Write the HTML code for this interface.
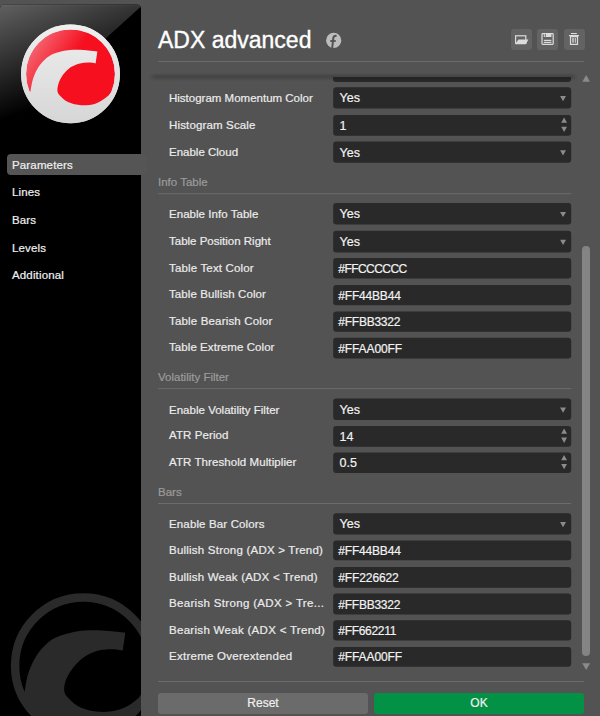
<!DOCTYPE html>
<html><head><meta charset="utf-8">
<style>
*{margin:0;padding:0;box-sizing:border-box}
html,body{width:600px;height:716px;overflow:hidden;background:#535353;font-family:"Liberation Sans",sans-serif}
.tab{-webkit-text-stroke:0.2px #f0f0f0;position:absolute;left:7px;width:140px;height:21.5px;line-height:23px;letter-spacing:0.15px;font-size:11.5px;color:#f0f0f0;padding-left:5px;border-radius:4px}
.tab.sel{background:#555}
#title{-webkit-text-stroke:0.35px #fff;position:absolute;left:158px;top:28px;font-size:23px;color:#fff;line-height:24px}
.ib{position:absolute;top:29px;width:21px;height:20.5px;background:#636363;border-radius:3px}
.hline{position:absolute;left:158px;top:61px;width:426px;height:1px;background:#6a6a6a}
.box{position:absolute;left:333px;width:238px;background:#292929;border-radius:3px}
.val{-webkit-text-stroke:0.2px #f2f2f2;position:absolute;left:339.5px;height:20px;line-height:20px;font-size:12.5px;color:#f2f2f2;white-space:nowrap}
.val.hex{left:338.3px;font-size:12px}
.lab{-webkit-text-stroke:0.2px #ececec;position:absolute;left:169px;height:20px;line-height:20px;font-size:11.5px;color:#ececec;white-space:nowrap}
.sec{-webkit-text-stroke:0.2px #9c9c9c;position:absolute;left:158px;height:20px;line-height:21.5px;font-size:11.5px;color:#9c9c9c}
.sep{position:absolute;left:158px;width:413px;height:1px;background:#6c6c6c}
.dd{position:absolute;right:6px;top:50%;margin-top:-2.5px;width:0;height:0;border-left:3px solid transparent;border-right:3px solid transparent;border-top:5px solid #8c8c8c}
.up{position:absolute;right:4px;top:3px;width:0;height:0;border-left:3px solid transparent;border-right:3px solid transparent;border-bottom:5.5px solid #8c8c8c}
.dn{position:absolute;right:4px;bottom:3px;width:0;height:0;border-left:3px solid transparent;border-right:3px solid transparent;border-top:5.5px solid #8c8c8c}
.btn{-webkit-text-stroke:0.2px #f0f0f0;position:absolute;top:693px;height:21px;border-radius:3px;font-size:12px;color:#f0f0f0;text-align:center;line-height:20px}
#shadow{position:absolute;left:149px;top:73px;width:429px;height:8px;background:linear-gradient(rgba(0,0,0,0) 0%,rgba(0,0,0,.17) 40%,rgba(0,0,0,.10) 70%,rgba(0,0,0,0) 100%);-webkit-mask-image:linear-gradient(90deg,transparent 0,#000 6px,#000 423px,transparent 429px)}
</style></head><body>
<svg style="position:absolute;left:0;top:0" width="141" height="716" viewBox="0 0 141 716">
 <defs>
  <linearGradient id="gl" gradientUnits="userSpaceOnUse" x1="0" y1="5" x2="38" y2="107"><stop offset="0" stop-color="#606060"/><stop offset="1" stop-color="#000"/></linearGradient>
  <linearGradient id="rg" gradientUnits="userSpaceOnUse" x1="0" y1="-100" x2="0" y2="100"><stop offset="0" stop-color="#efefef"/><stop offset="1" stop-color="#d6d6d6"/></linearGradient>
  <linearGradient id="redg" gradientUnits="userSpaceOnUse" x1="-80" y1="-80" x2="0" y2="-25"><stop offset="0" stop-color="#f47682"/><stop offset="1" stop-color="#f50f1f"/></linearGradient>
  
  <clipPath id="pc"><path d="M0 716 V9 Q0 4.4 4.6 4.4 H136.4 Q141 4.4 141 9 V716 Z"/></clipPath>
 </defs>
 <g clip-path="url(#pc)">
  <rect x="-4" y="4" width="145" height="712" fill="#000"/>
  <path d="M-4 4 H141 V6.5 L0 134 H-4 Z" fill="url(#gl)"/>
  <rect x="0" y="4.4" width="141" height="1.2" fill="#fff" fill-opacity="0.05"/>
  <g transform="translate(83.4 665.75) scale(0.725)" fill="#2a2a2a">
   <path d="M-81.0 35.6 C-80.3 31.8 -78.8 20.0 -76.7 12.8 C-74.6 5.6 -71.7 -1.5 -68.3 -7.7 C-64.9 -13.9 -61.3 -19.5 -56.5 -24.6 C-51.7 -29.7 -46.2 -34.8 -39.5 -38.3 C-32.7 -41.8 -22.9 -44.0 -16.1 -45.7 C-9.3 -47.4 -5.0 -48.0 1.3 -48.5 C7.5 -49.0 15.0 -49.2 21.4 -49.0 C27.8 -48.8 33.4 -48.1 39.5 -47.5 C45.6 -46.9 54.8 -45.8 57.8 -45.5 L54.3 -21.3 C51.7 -21.6 44.2 -22.9 38.9 -22.9 C33.6 -22.9 28.2 -22.6 22.7 -21.3 C17.1 -20.0 10.6 -17.6 5.5 -14.8 C0.4 -12.0 -4.2 -8.2 -8.1 -4.3 C-12.1 -0.4 -15.6 4.1 -18.4 8.7 C-21.3 13.3 -24.0 18.7 -25.3 23.3 C-26.6 27.9 -27.0 32.6 -26.1 36.2 C-25.2 39.8 -23.9 41.5 -20.2 45.0 C-16.5 48.5 -11.0 54.4 -4.0 57.5 C3.0 60.6 13.0 63.0 22.0 63.5 C31.0 64.0 41.7 63.1 50.0 60.5 C58.3 57.9 65.6 52.9 72.0 48.0 C78.4 43.1 85.8 34.0 88.5 31.2 L89.7 31.3 A95 95 0 0 1 -86.8 38.6 Z"/>
   <circle r="94.2" fill="none" stroke="#2a2a2a" stroke-width="11.6"/>
  </g>
 </g>
 <g transform="translate(70.5 73.9) scale(0.494)">
  <circle r="100" fill="url(#rg)"/>
  <circle r="90" fill="url(#redg)"/>
  <path d="M-81.0 35.6 C-80.3 31.8 -78.8 20.0 -76.7 12.8 C-74.6 5.6 -71.7 -1.5 -68.3 -7.7 C-64.9 -13.9 -61.3 -19.5 -56.5 -24.6 C-51.7 -29.7 -46.0 -34.8 -39.5 -38.3 C-33.0 -41.8 -23.8 -44.0 -17.4 -45.7 C-11.0 -47.4 -6.9 -48.0 -1.0 -48.5 C4.9 -49.0 11.8 -49.2 18.0 -49.0 C24.2 -48.8 29.9 -48.1 36.0 -47.5 C42.0 -46.9 51.2 -45.8 54.3 -45.5 L50.8 -21.3 C48.2 -21.6 40.7 -22.9 35.4 -22.9 C30.1 -22.9 24.6 -22.6 19.2 -21.3 C13.8 -20.0 7.9 -17.6 3.0 -14.8 C-1.9 -12.0 -6.1 -8.2 -9.9 -4.3 C-13.7 -0.4 -17.0 4.1 -19.6 8.7 C-22.2 13.3 -24.2 18.7 -25.3 23.3 C-26.4 27.9 -27.0 32.6 -26.1 36.2 C-25.2 39.8 -23.9 41.5 -20.2 45.0 C-16.5 48.5 -11.0 54.4 -4.0 57.5 C3.0 60.6 13.0 63.0 22.0 63.5 C31.0 64.0 41.7 63.1 50.0 60.5 C58.3 57.9 65.6 52.9 72.0 48.0 C78.4 43.1 85.8 34.0 88.5 31.2 L89.7 31.3 A95 95 0 0 1 -86.8 38.6 Z" fill="url(#rg)"/>
  <circle r="95" fill="none" stroke="url(#rg)" stroke-width="10"/>
 </g>
</svg>
<div class="tab sel" style="top:153.5px">Parameters</div>
<div class="tab" style="top:181.2px">Lines</div>
<div class="tab" style="top:209.1px">Bars</div>
<div class="tab" style="top:237px">Levels</div>
<div class="tab" style="top:264.2px">Additional</div>

<div id="title">ADX advanced</div>
<svg style="position:absolute;left:322px;top:30px" width="24" height="22" viewBox="322 30 24 22">
 <circle cx="333.7" cy="40.4" r="7.6" fill="#bdbdbd"/>
 <path d="M332.2 48 L333.3 38.2 Q333.7 35.6 336.6 35.9" fill="none" stroke="#535353" stroke-width="2"/>
 <path d="M330.2 41 H335.8" stroke="#535353" stroke-width="1.8"/>
</svg>
<div class="ib" style="left:511px"></div>
<div class="ib" style="left:537px"></div>
<div class="ib" style="left:564px"></div>
<svg style="position:absolute;left:500px;top:25px" width="100" height="30" viewBox="500 25 100 30">
 <g fill="none" stroke="#dcdcdc" stroke-width="1.2">
  <rect x="515.6" y="35.8" width="10.2" height="7.4"/>
  <rect x="542" y="33.6" width="11.2" height="10.8" rx="0.8"/>
  <path d="M570.5 36.6 H577.5 V44.4 H570.5 Z"/>
 </g>
 <path d="M518.4 39.6 H528.4 L525.8 44.2 H515.2 Z" fill="#dcdcdc"/>
 <rect x="543.8" y="33.4" width="7.6" height="3.6" fill="#dcdcdc"/>
 <rect x="544.8" y="34" width="1" height="2.6" fill="#636363"/>
 <rect x="543.8" y="39.8" width="7.6" height="1.2" fill="#dcdcdc"/>
 <rect x="543.8" y="41.8" width="7.6" height="1.2" fill="#dcdcdc"/>
 <rect x="571" y="33" width="5.8" height="1.1" fill="#dcdcdc"/>
 <rect x="569" y="35" width="10" height="1.2" fill="#dcdcdc"/>
 <rect x="571.9" y="37.9" width="2.1" height="4.8" fill="#b4b4b4"/><rect x="574.8" y="37.9" width="1.1" height="4.8" fill="#cfcfcf"/>
</svg>
<div class="hline"></div>

<div class="box" style="top:76.6px;height:5px;border-radius:0 0 3px 3px"></div>
<div id="shadow"></div>

<svg style="position:absolute;left:0;top:0" width="600" height="716" viewBox="0 0 600 716">
<rect x="333.2" y="87.20" width="238" height="21.30" rx="3" fill="#292929"/>
<path d="M560.1 96.05 H566 L563.05 101.25 Z" fill="#8c8c8c"/>
<rect x="333.2" y="115.10" width="238" height="20.70" rx="3" fill="#292929"/>
<path d="M561.2 122.85 H567 L564.1 117.55 Z M561.2 126.65 H567 L564.1 131.95 Z" fill="#8c8c8c"/>
<rect x="333.2" y="141.50" width="238" height="21.30" rx="3" fill="#292929"/>
<path d="M560.1 150.35 H566 L563.05 155.55 Z" fill="#8c8c8c"/>
<rect x="333.2" y="203.00" width="238" height="21.40" rx="3" fill="#292929"/>
<path d="M560.1 211.90 H566 L563.05 217.10 Z" fill="#8c8c8c"/>
<rect x="333.2" y="230.70" width="238" height="21.80" rx="3" fill="#292929"/>
<path d="M560.1 239.80 H566 L563.05 245.00 Z" fill="#8c8c8c"/>
<rect x="333.2" y="258.00" width="238" height="20.60" rx="3" fill="#292929"/>
<rect x="333.2" y="285.00" width="238" height="20.30" rx="3" fill="#292929"/>
<rect x="333.2" y="311.50" width="238" height="20.20" rx="3" fill="#292929"/>
<rect x="333.2" y="337.80" width="238" height="20.70" rx="3" fill="#292929"/>
<rect x="333.2" y="398.60" width="238" height="21.30" rx="3" fill="#292929"/>
<path d="M560.1 407.45 H566 L563.05 412.65 Z" fill="#8c8c8c"/>
<rect x="333.2" y="426.10" width="238" height="20.60" rx="3" fill="#292929"/>
<path d="M561.2 433.80 H567 L564.1 428.50 Z M561.2 437.60 H567 L564.1 442.90 Z" fill="#8c8c8c"/>
<rect x="333.2" y="452.60" width="238" height="20.40" rx="3" fill="#292929"/>
<path d="M561.2 460.20 H567 L564.1 454.90 Z M561.2 464.00 H567 L564.1 469.30 Z" fill="#8c8c8c"/>
<rect x="333.2" y="513.20" width="238" height="21.20" rx="3" fill="#292929"/>
<path d="M560.1 522.00 H566 L563.05 527.20 Z" fill="#8c8c8c"/>
<rect x="333.2" y="540.60" width="238" height="19.70" rx="3" fill="#292929"/>
<rect x="333.2" y="566.90" width="238" height="20.80" rx="3" fill="#292929"/>
<rect x="333.2" y="593.60" width="238" height="20.80" rx="3" fill="#292929"/>
<rect x="333.2" y="620.30" width="238" height="20.20" rx="3" fill="#292929"/>
<rect x="333.2" y="647.00" width="238" height="19.80" rx="3" fill="#292929"/>
<rect x="158" y="193.20" width="413.2" height="1" fill="#6c6c6c"/>
<rect x="158" y="388.10" width="413.2" height="1" fill="#6c6c6c"/>
<rect x="158" y="503.00" width="413.2" height="1" fill="#6c6c6c"/>
</svg>
<div class="val" style="top:88.42px">Yes</div>
<div class="lab" style="top:88.25px;letter-spacing:0px">Histogram Momentum Color</div>
<div class="val" style="top:116.02px">1</div>
<div class="lab" style="top:114.55px;letter-spacing:0.15px">Histogram Scale</div>
<div class="val" style="top:142.72px">Yes</div>
<div class="lab" style="top:142.45px;letter-spacing:0px">Enable Cloud</div>
<div class="val" style="top:204.27px">Yes</div>
<div class="lab" style="top:203.65px;letter-spacing:0.04px">Enable Info Table</div>
<div class="val" style="top:232.17px">Yes</div>
<div class="lab" style="top:231.30px;letter-spacing:0px">Table Position Right</div>
<div class="val hex" style="top:258.87px;letter-spacing:-0.55px">#FFCCCCCC</div>
<div class="lab" style="top:257.85px;letter-spacing:0.16px">Table Text Color</div>
<div class="val hex" style="top:285.72px;letter-spacing:-0.19px">#FF44BB44</div>
<div class="lab" style="top:284.20px;letter-spacing:0.09px">Table Bullish Color</div>
<div class="val hex" style="top:312.17px;letter-spacing:-0.25px">#FFBB3322</div>
<div class="lab" style="top:311.05px;letter-spacing:0.17px">Table Bearish Color</div>
<div class="val hex" style="top:338.72px;letter-spacing:-0.12px">#FFAA00FF</div>
<div class="lab" style="top:337.25px;letter-spacing:0.07px">Table Extreme Color</div>
<div class="val" style="top:399.82px">Yes</div>
<div class="lab" style="top:399.65px;letter-spacing:0.02px">Enable Volatility Filter</div>
<div class="val" style="top:426.97px">14</div>
<div class="lab" style="top:425.35px;letter-spacing:0.1px">ATR Period</div>
<div class="val" style="top:453.37px">0.5</div>
<div class="lab" style="top:452.15px;letter-spacing:0.08px">ATR Threshold Multiplier</div>
<div class="val" style="top:514.37px">Yes</div>
<div class="lab" style="top:513.65px;letter-spacing:0.14px">Enable Bar Colors</div>
<div class="val hex" style="top:541.02px;letter-spacing:-0.19px">#FF44BB44</div>
<div class="lab" style="top:540.18px;letter-spacing:0.22px">Bullish Strong (ADX &gt; Trend)</div>
<div class="val hex" style="top:567.87px;letter-spacing:-0.12px">#FF226622</div>
<div class="lab" style="top:566.75px;letter-spacing:0.21px">Bullish Weak (ADX &lt; Trend)</div>
<div class="val hex" style="top:594.57px;letter-spacing:-0.25px">#FFBB3322</div>
<div class="lab" style="top:593.35px;letter-spacing:0.33px">Bearish Strong (ADX &gt; Tre...</div>
<div class="val hex" style="top:620.97px;letter-spacing:-0.31px">#FF662211</div>
<div class="lab" style="top:619.60px;letter-spacing:0.3px">Bearish Weak (ADX &lt; Trend)</div>
<div class="val hex" style="top:647.47px;letter-spacing:-0.12px">#FFAA00FF</div>
<div class="lab" style="top:646.45px;letter-spacing:0.26px">Extreme Overextended</div>
<div class="sec" style="top:172.26px">Info Table</div>
<div class="sec" style="top:367.26px">Volatility Filter</div>
<div class="sec" style="top:482.26px">Bars</div>

<svg style="position:absolute;left:578px;top:70px" width="16" height="610" viewBox="578 70 16 610">
 <path d="M582.3 81.7 L586.2 75 L590 81.7 Z" fill="#8a8a8a"/>
 <rect x="582" y="246" width="8" height="410" rx="4" fill="#848484"/>
 <path d="M582.2 663.2 L590.1 663.2 L586.2 669.9 Z" fill="#8a8a8a"/>
</svg>
<div class="sep" style="top:681.2px;width:426px"></div>
<div class="btn" style="left:158px;width:210px;background:#6b6b6b">Reset</div>
<div class="btn" style="left:374px;width:210px;background:#029145">OK</div>
</body></html>
